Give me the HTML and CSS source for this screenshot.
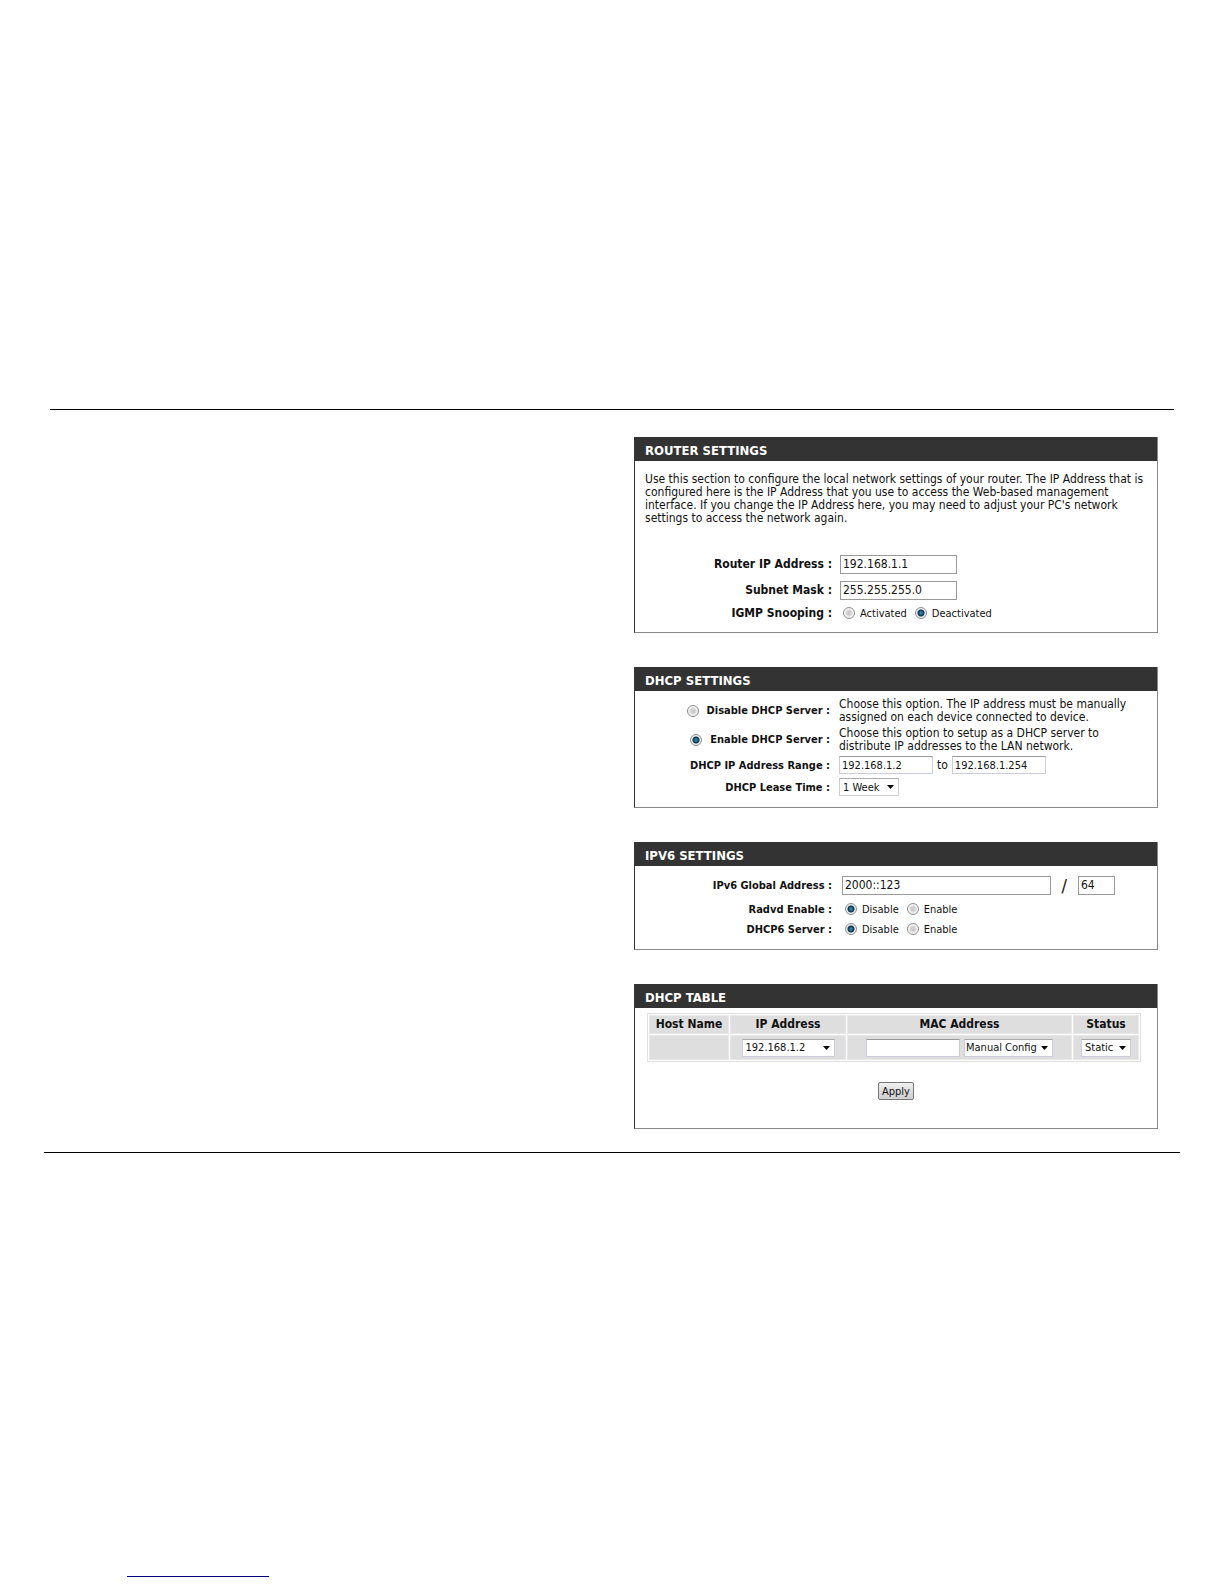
FILE: index.html
```html
<!DOCTYPE html>
<html lang="en">
<head>
    <meta charset="UTF-8">
    <meta name="viewport" content="width=device-width, initial-scale=1.0">
    <title>Router Settings</title>
    <link rel="stylesheet" href="styles.css">
</head>
<body>
    <hr class="line line-top">
    <main class="settings">
        <section class="panel router">
            <h2>ROUTER SETTINGS</h2>
            <p class="intro">Use this section to configure the local network settings of your router. The IP Address that is<br>configured here is the IP Address that you use to access the Web-based management<br>interface. If you change the IP Address here, you may need to adjust your PC's network<br>settings to access the network again.</p>
            <div class="row row-tall">
                <label class="name" for="router-ip">Router IP Address :</label>
                <input type="text" class="text ip" id="router-ip" value="192.168.1.1">
            </div>
            <div class="row row-tall">
                <label class="name" for="subnet">Subnet Mask :</label>
                <input type="text" class="text ip" id="subnet" value="255.255.255.0">
            </div>
            <div class="row" role="radiogroup" aria-labelledby="igmp">
                <span class="name" id="igmp">IGMP Snooping :</span>
                <div class="options">
                    <label><input type="radio" name="igmp">Activated</label>
                    <label><input type="radio" name="igmp" checked>Deactivated</label>
                </div>
            </div>
        </section>

        <section class="panel dhcp">
            <h2>DHCP SETTINGS</h2>
            <div class="row row-choice">
                <label class="name"><input type="radio" name="dhcp">Disable DHCP Server :</label>
                <p>Choose this option. The IP address must be manually<br>assigned on each device connected to device.</p>
            </div>
            <div class="row row-choice">
                <label class="name"><input type="radio" name="dhcp" checked>Enable DHCP Server :</label>
                <p>Choose this option to setup as a DHCP server to<br>distribute IP addresses to the LAN network.</p>
            </div>
            <div class="row">
                <label class="name" for="range-start">DHCP IP Address Range :</label>
                <div class="range">
                    <input type="text" class="text small" id="range-start" value="192.168.1.2">
                    <label for="range-end">to</label>
                    <input type="text" class="text small" id="range-end" value="192.168.1.254">
                </div>
            </div>
            <div class="row">
                <label class="name" for="lease">DHCP Lease Time :</label>
                <select class="lease" id="lease"><option>1 Week</option></select>
            </div>
        </section>

        <section class="panel ipv6">
            <h2>IPV6 SETTINGS</h2>
            <div class="row row-tall">
                <label class="name" for="ipv6">IPv6 Global Address :</label>
                <div class="address">
                    <input type="text" class="text" id="ipv6" value="2000::123">
                    <span class="slash">/</span>
                    <input type="text" class="text prefix" value="64" aria-label="Prefix length">
                </div>
            </div>
            <div class="row" role="radiogroup" aria-labelledby="radvd">
                <span class="name" id="radvd">Radvd Enable :</span>
                <div class="options">
                    <label><input type="radio" name="radvd" checked>Disable</label>
                    <label><input type="radio" name="radvd">Enable</label>
                </div>
            </div>
            <div class="row" role="radiogroup" aria-labelledby="dhcp6">
                <span class="name" id="dhcp6">DHCP6 Server :</span>
                <div class="options">
                    <label><input type="radio" name="dhcp6" checked>Disable</label>
                    <label><input type="radio" name="dhcp6">Enable</label>
                </div>
            </div>
        </section>

        <section class="panel clients">
            <h2>DHCP TABLE</h2>
            <table>
                <thead>
                    <tr>
                        <th class="col-host">Host Name</th>
                        <th class="col-ip">IP Address</th>
                        <th>MAC Address</th>
                        <th class="col-status">Status</th>
                    </tr>
                </thead>
                <tbody>
                    <tr>
                        <td></td>
                        <td><select class="client-ip" aria-label="IP Address"><option>192.168.1.2</option></select></td>
                        <td>
                            <div class="mac">
                                <input type="text" class="text small" aria-label="MAC Address">
                                <select class="config" aria-label="Configuration"><option>Manual Config</option></select>
                            </div>
                        </td>
                        <td><select class="status" aria-label="Status"><option>Static</option></select></td>
                    </tr>
                </tbody>
            </table>
            <button type="button">Apply</button>
        </section>
    </main>
    <hr class="line">
    <hr class="link-line">
</body>
</html>
```
FILE: styles.css
```css
* {
    box-sizing: border-box;
}

body {
    margin: 0;
    padding: 409px 44px 8px;
    background-color: #fff;
    color: #111;
    font-family: "DejaVu Sans Condensed", "DejaVu Sans", sans-serif;
    font-size: 11px;
    line-height: 13px;
}

p {
    margin: 0;
    font-size: 12px;
}

.line {
    height: 1px;
    margin: 0;
    border: none;
    background-color: #000;
}

.line-top {
    margin: 0 6px;
}

.link-line {
    width: 142px;
    height: 1px;
    margin: 423px 0 0 83px;
    border: none;
    background-color: #000080;
}

.settings {
    display: flex;
    flex-direction: column;
    gap: 34px;
    margin: 27px 22px 23px 590px;
}

.panel {
    border: 1px solid #888;
    border-left-color: #333;
    border-top: none;
}

h2 {
    margin: 0;
    padding: 3px 10px 0;
    background-color: #333;
    color: #fff;
    font-size: 13px;
    line-height: 21px;
}

.intro {
    padding: 12px 10px 26px;
}

.row {
    display: grid;
    grid-template-columns: 195px 1fr;
    column-gap: 9px;
    align-items: center;
    min-height: 20px;
}

.row-tall {
    min-height: 26px;
}

.name {
    display: flex;
    justify-content: flex-end;
    align-items: center;
    gap: 8px;
    font-weight: bold;
}

.router {
    padding-bottom: 9px;
}

.router .row {
    grid-template-columns: 197px 1fr;
    column-gap: 8px;
}

.router .name {
    font-size: 12px;
}

.dhcp {
    padding-bottom: 9px;
}

.dhcp h2,
.ipv6 h2 {
    margin-bottom: 5px;
}

.dhcp .row {
    min-height: 22px;
}

.dhcp .row-choice {
    min-height: 29px;
}

.ipv6 {
    padding-bottom: 10px;
}

.ipv6 .row {
    grid-template-columns: 197px 1fr;
    column-gap: 10px;
}

.ipv6 .row-tall {
    min-height: 28px;
}

.text {
    height: 19px;
    margin: 0;
    padding: 0 2px;
    border: 1px solid #999;
    background-color: #fff;
    color: #111;
    font: inherit;
    font-size: 12px;
}

.ip {
    width: 117px;
}

.small {
    width: 94px;
    height: 18px;
    border-color: #999 #ccd #ccd;
    font-size: 11px;
}

.range,
.address,
.mac {
    display: flex;
    align-items: center;
}

.range {
    gap: 4px;
    font-size: 12px;
}

.address {
    gap: 11px;
    margin-right: 42px;
}

.address .text {
    flex: 1;
    min-width: 0;
}

.address .prefix {
    flex: 0 0 37px;
}

.slash {
    font-size: 18px;
}

.options {
    display: flex;
    gap: 8px;
    padding-left: 3px;
}

.options label {
    display: flex;
    align-items: center;
    gap: 5px;
}

input[type="radio"] {
    appearance: none;
    width: 12px;
    height: 12px;
    margin: 0;
    border: 1px solid #8e8f8f;
    border-radius: 50%;
    background: radial-gradient(circle, #ccc 2px, #f2f2f2 4px);
}

input[type="radio"]:checked {
    background: radial-gradient(circle, #3e93b8 0, #1c5a7c 2px, #12303e 3px, #e8eef2 4px);
}

select {
    appearance: none;
    height: 18px;
    margin: 0;
    padding: 0 3px;
    border: 1px solid #ccd;
    border-top-color: #aaa;
    border-radius: 0;
    background: #fff url("data:image/svg+xml,%3Csvg xmlns='http://www.w3.org/2000/svg' width='7' height='4'%3E%3Cpath d='M0 0h7L3.5 4z'/%3E%3C/svg%3E") no-repeat right 4px center;
    color: #111;
    font: inherit;
}

.lease {
    width: 60px;
}

table {
    width: calc(100% - 28px);
    margin: 5px 16px 0 12px;
    border: 1px solid #e0e0e0;
    border-collapse: separate;
    border-spacing: 1px;
    table-layout: fixed;
}

th,
td {
    height: 25px;
    padding: 0;
    border: 1px solid #e8e8e8;
    background-color: #dedede;
    text-align: center;
}

th {
    height: 19px;
    font-size: 12px;
}

.col-host {
    width: 80px;
}

.col-ip {
    width: 116px;
}

.col-status {
    width: 66px;
}

.client-ip {
    width: 93px;
}

.mac {
    justify-content: center;
    gap: 4px;
}

.config {
    width: 89px;
    padding: 0 1px;
}

.status {
    width: 50px;
}

button {
    display: block;
    width: 36px;
    height: 18px;
    margin: 20px auto 28px;
    padding: 0;
    border: 1px solid #777;
    border-radius: 2px;
    background: linear-gradient(#f2f2f2, #ddd 50%, #d0d0d0);
    color: #111;
    font: inherit;
}
```
